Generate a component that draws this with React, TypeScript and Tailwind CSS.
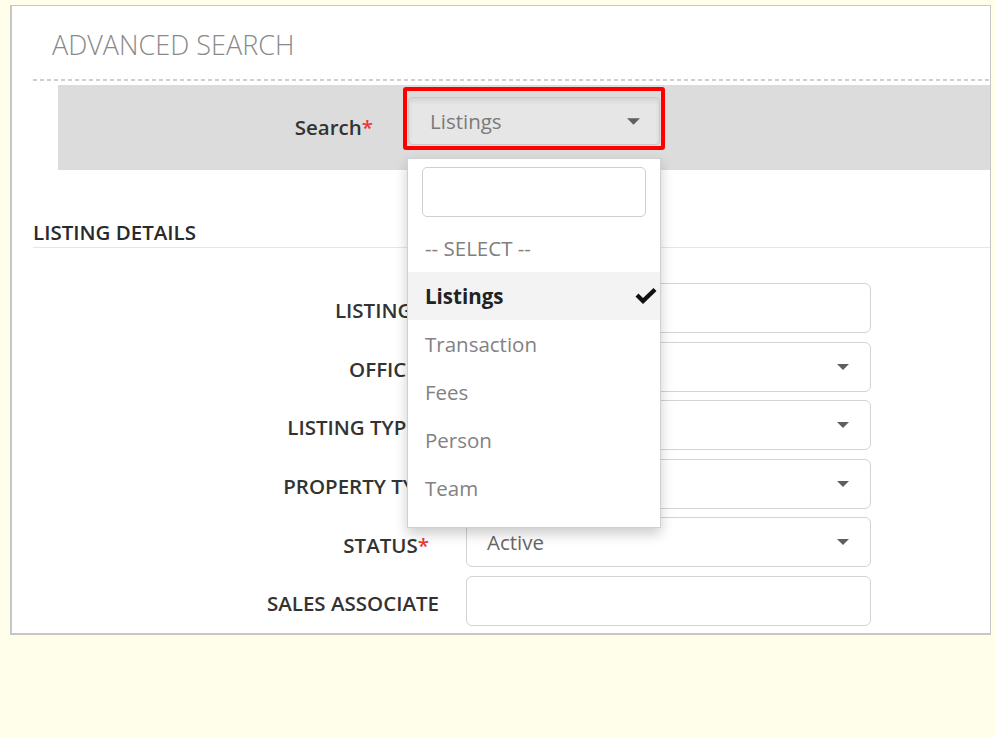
import React from "react"

const rows = [
  { label: "LISTING ID", kind: "input" as const },
  { label: "OFFICE", required: true, kind: "select" as const },
  { label: "LISTING TYPE", required: true, kind: "select" as const },
  { label: "PROPERTY TYPE", kind: "select" as const },
  { label: "STATUS", required: true, kind: "select" as const, value: "Active" },
  { label: "SALES ASSOCIATE", kind: "input" as const },
]

const options = ["Transaction", "Fees", "Person", "Team"]

function Caret({ className = "" }: { className?: string }) {
  return (
    <svg viewBox="0 0 12 6" className={className} fill="#5f5f5f">
      <path d="M0 0h12L6 6z" />
    </svg>
  )
}

export default function App() {
  return (
    <div className="min-h-[737px] bg-[#fffeea] pt-[5px] pl-[10px] font-['Open_Sans',sans-serif]">
      <div className="relative h-[630px] w-[981px] border-2 border-t border-r border-[#c6c6c6] bg-white">
        {/* Header */}
        <h1 className="pt-[21px] pl-[40px] text-[27px] font-light leading-[36px] text-[#8a8a8a]">
          ADVANCED SEARCH
        </h1>
        <div className="mt-[16px] ml-[21px] h-[2px] bg-[repeating-linear-gradient(90deg,#cfcfcf_0_4px,transparent_4px_7px)]" />

        {/* Search type band */}
        <div className="mt-[4px] ml-[46px] flex h-[85px] items-start bg-[#dcdcdc] pt-[2px]">
          <div className="w-[315px] pt-[26px] text-right text-[20.5px] font-semibold leading-[28px] text-[#333]">
            Search<span className="text-[#e8383d]">*</span>
          </div>
          <div className="relative ml-[30px]">
            <div className="rounded-[3px] border-[4px] border-[#ff0000] px-[1px] pt-[6px] pb-[1px]">
              <div className="flex h-[48px] w-[252px] items-center justify-between rounded-[4px] border border-[#c9c9c9] bg-[#e6e6e6] pl-[21px] pr-[19px] shadow-[inset_0_3px_5px_rgba(0,0,0,0.08)]">
                <span className="text-[20.5px] text-[#7a7a7a]">Listings</span>
                <Caret className="h-[7px] w-[13px]" />
              </div>
            </div>

            {/* Open dropdown menu */}
            <div className="absolute top-[71px] left-[4px] z-10 w-[254px] border border-[#d0d0d0] bg-white pt-[8px] pb-[15px] shadow-[0_6px_12px_rgba(0,0,0,0.2)]">
              <div className="mx-[14px] h-[50px] rounded-[5px] border border-[#cfcfcf]" />
              <ul className="mt-[7px] text-[20.5px]">
                <li className="flex h-[48px] items-center pl-[17px] text-[#808080]">-- SELECT --</li>
                <li className="flex h-[48px] items-center justify-between bg-[#f3f3f3] pl-[17px] pr-[3px] font-bold text-[#222]">
                  Listings
                  <svg viewBox="0 0 22 16" className="h-[16px] w-[22px]" fill="#111">
                    <path d="M0.5 8.5 L3.5 5.5 L8 10 L18.5 0 L21.5 3 L8 16 Z" />
                  </svg>
                </li>
                {options.map((o) => (
                  <li key={o} className="flex h-[48px] items-center pl-[17px] text-[#828282]">
                    {o}
                  </li>
                ))}
              </ul>
            </div>
          </div>
        </div>

        {/* Listing details */}
        <div className="ml-[21px] mt-[48px] border-b border-[#e6e6e6] pb-[1px] text-[20.5px] font-semibold leading-[28px] text-[#2a2a2a]">
          LISTING DETAILS
        </div>

        <div className="mt-[35px] flex flex-col gap-[8.6px]">
          {rows.map((r) => (
            <div key={r.label} className="flex items-center">
              <div
                className={`w-[427px] pt-[5px] text-right text-[20.5px] font-semibold text-[#333] ${r.required ? "pr-[10px]" : ""}`}
              >
                {r.label}
                {r.required && <span className="text-[#e8383d]">*</span>}
              </div>
              <div className="ml-[27px] flex h-[50px] w-[405px] items-center justify-between rounded-[6px] border border-[#d3d3d3] bg-white pl-[20px] pr-[21px]">
                <span className="text-[20.5px] text-[#666]">{r.value ?? ""}</span>
                {r.kind === "select" && <Caret className="h-[6px] w-[12px]" />}
              </div>
            </div>
          ))}
        </div>
      </div>
    </div>
  )
}
